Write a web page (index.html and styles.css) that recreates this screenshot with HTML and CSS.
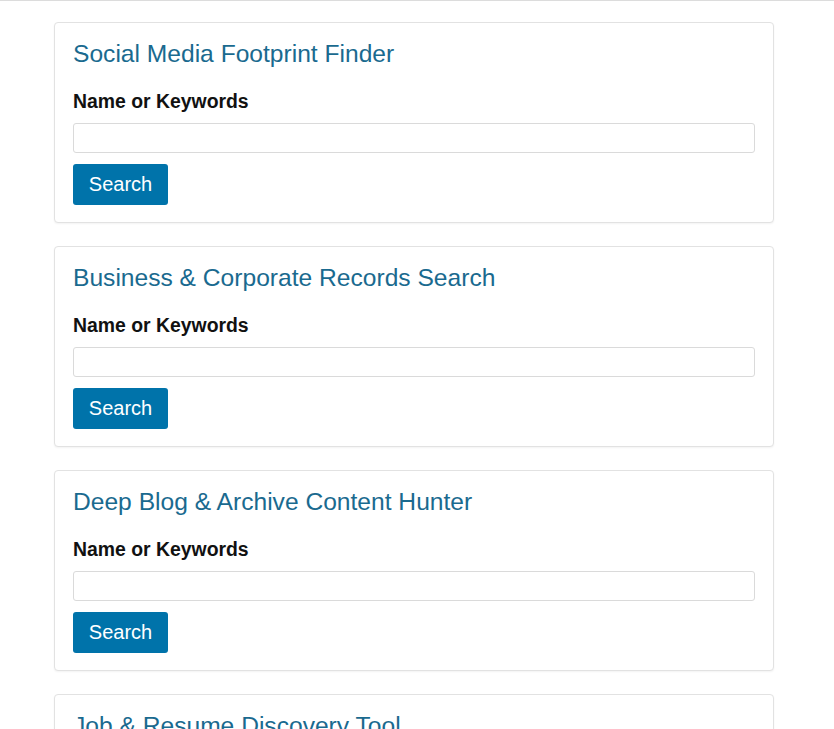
FILE: index.html
```html
<!DOCTYPE html>
<html lang="en">
<head>
<meta charset="utf-8">
<title>Search Tools</title>
<link rel="stylesheet" href="styles.css">
</head>
<body>
<div class="topline"></div>
<main class="tools">
  <section class="card">
    <h2 class="card-title">Social Media Footprint Finder</h2>
    <label class="field-label" for="q1">Name or Keywords</label>
    <input class="field-input" id="q1" type="text">
    <button class="btn" type="button">Search</button>
  </section>
  <section class="card">
    <h2 class="card-title">Business &amp; Corporate Records Search</h2>
    <label class="field-label" for="q2">Name or Keywords</label>
    <input class="field-input" id="q2" type="text">
    <button class="btn" type="button">Search</button>
  </section>
  <section class="card">
    <h2 class="card-title">Deep Blog &amp; Archive Content Hunter</h2>
    <label class="field-label" for="q3">Name or Keywords</label>
    <input class="field-input" id="q3" type="text">
    <button class="btn" type="button">Search</button>
  </section>
  <section class="card">
    <h2 class="card-title">Job &amp; Resume Discovery Tool</h2>
    <label class="field-label" for="q4">Name or Keywords</label>
    <input class="field-input" id="q4" type="text">
    <button class="btn" type="button">Search</button>
  </section>
</main>
</body>
</html>
```
FILE: styles.css
```css
html, body {
  margin: 0;
  padding: 0;
  background: #fff;
  font-family: "Liberation Sans", Arial, sans-serif;
}
.topline {
  border-bottom: 1px solid #dcdcdc;
}
.tools {
  width: 720px;
  margin-left: 54px;
  padding-top: 21px;
  display: flex;
  flex-direction: column;
  gap: 23px;
}
.card {
  box-sizing: border-box;
  border: 1px solid #e2e2e2;
  border-radius: 4px;
  box-shadow: 0 1px 2px rgba(0,0,0,0.05);
  padding: 17px 18px 17px;
  display: flex;
  flex-direction: column;
  align-items: flex-start;
  background: #fff;
}
.card-title {
  margin: 0;
  font-size: 24.6px;
  line-height: 28px;
  font-weight: normal;
  color: #1a6a8f;
}
.field-label {
  margin-top: 22px;
  font-size: 19.4px;
  line-height: 23px;
  font-weight: bold;
  color: #111;
}
.field-input {
  box-sizing: border-box;
  margin-top: 10px;
  width: 682px;
  height: 30px;
  border: 1px solid #dadada;
  border-radius: 3px;
  padding: 4px 8px;
  font-size: 16px;
  font-family: inherit;
}
.btn {
  margin-top: 11px;
  box-sizing: border-box;
  width: 95px;
  height: 41px;
  border: 0;
  border-radius: 3px;
  background: #0073aa;
  color: #fff;
  font-family: inherit;
  font-size: 20px;
  padding: 0;
  cursor: pointer;
}
```
